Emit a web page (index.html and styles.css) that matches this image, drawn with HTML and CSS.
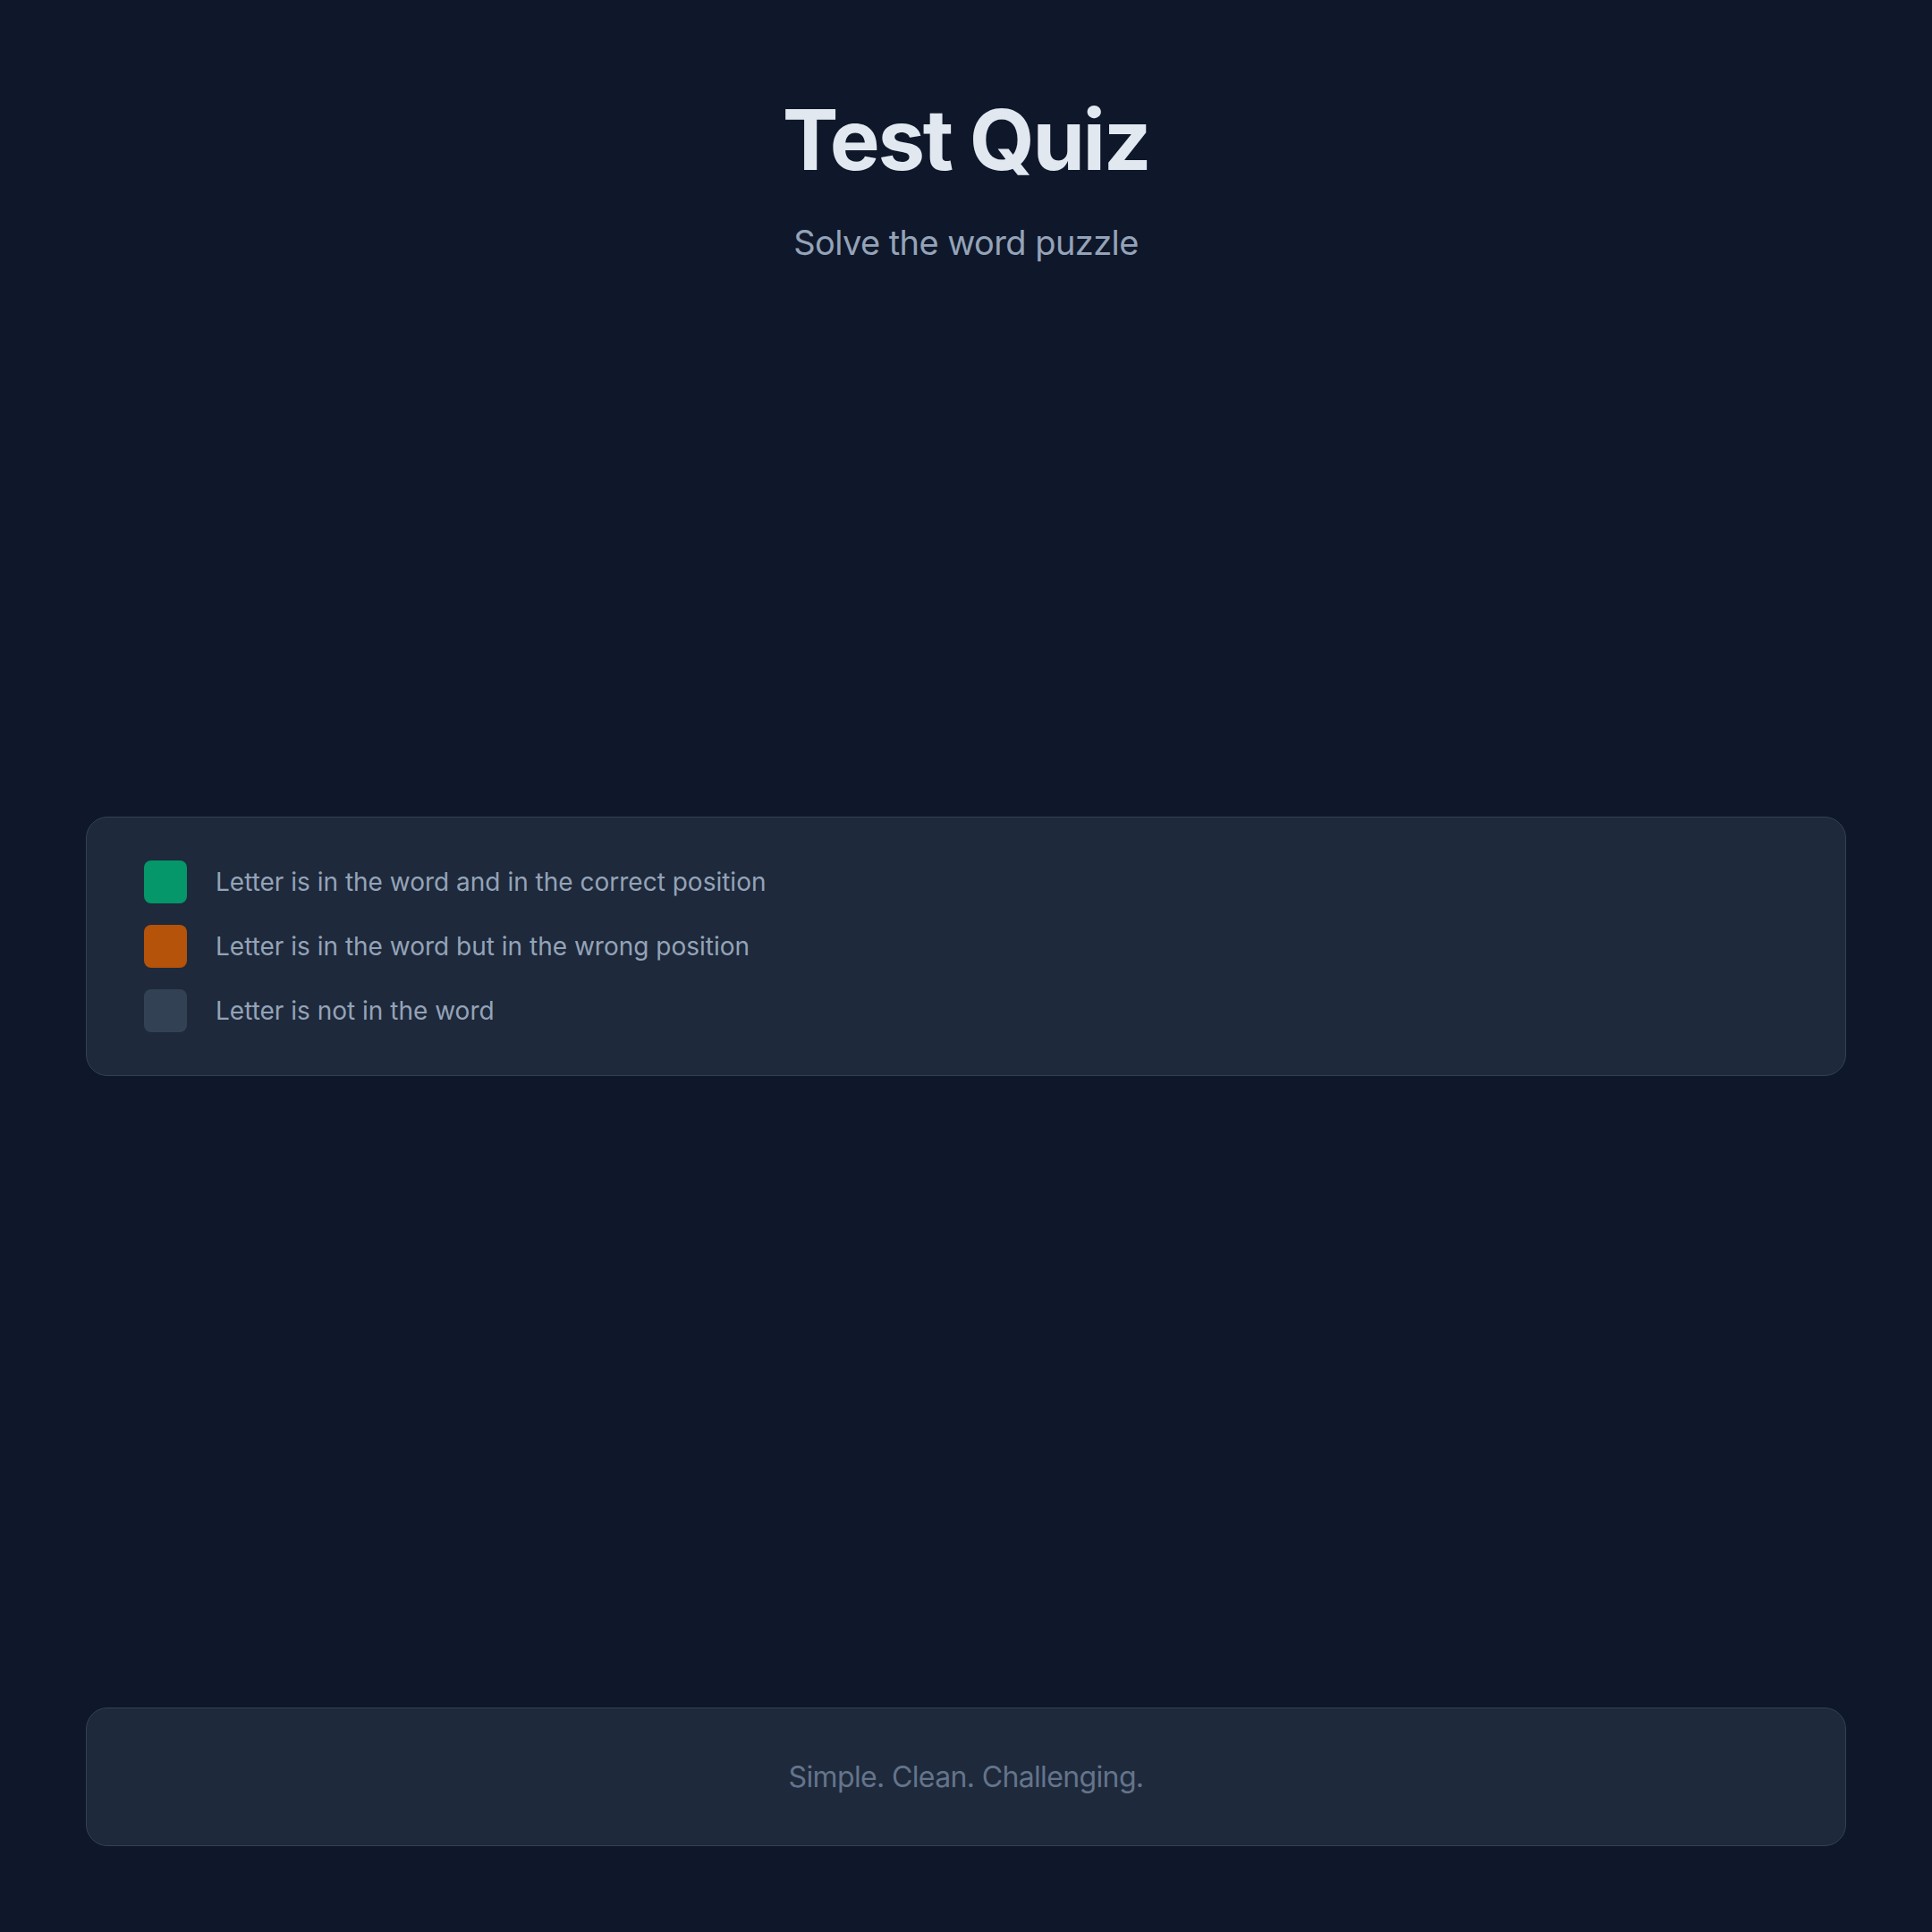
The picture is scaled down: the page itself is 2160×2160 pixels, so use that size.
FILE: index.html
```html
<!DOCTYPE html>
<html lang="en">
<head>
<meta charset="utf-8">
<title>Test Quiz</title>
<link rel="stylesheet" href="styles.css">
</head>
<body>
<div class="page">
  <header class="header">
    <h1 class="title">Test Quiz</h1>
    <p class="subtitle">Solve the word puzzle</p>
  </header>
  <section class="legend">
    <div class="legend-row">
      <span class="swatch swatch-correct"></span>
      <span class="legend-text">Letter is in the word and in the correct position</span>
    </div>
    <div class="legend-row">
      <span class="swatch swatch-present"></span>
      <span class="legend-text">Letter is in the word but in the wrong position</span>
    </div>
    <div class="legend-row">
      <span class="swatch swatch-absent"></span>
      <span class="legend-text">Letter is not in the word</span>
    </div>
  </section>
  <footer class="footer">
    <p class="footer-text">Simple. Clean. Challenging.</p>
  </footer>
</div>
</body>
</html>
```

FILE: styles.css
```css
* { box-sizing: border-box; }
html, body { margin: 0; padding: 0; }
body {
  background: #0f172a;
  font-family: Inter, "Noto Sans", "Liberation Sans", sans-serif;
  color: #e2e8f0;
}
.page {
  min-height: 100vh;
  display: flex;
  flex-direction: column;
  padding: 109px 96px 96px;
}
.header { text-align: center; }
.title {
  margin: 0;
  font-size: 94px;
  line-height: 1;
  font-weight: 700;
  letter-spacing: -0.025em;
  color: #e2e8f0;
}
.subtitle {
  margin: 38px 0 0;
  font-size: 38px;
  line-height: 60px;
  letter-spacing: -0.015em;
  color: #94a3b8;
}
.legend {
  margin-top: 612px;
  background: #1e293b;
  border: 1px solid #334155;
  border-radius: 24px;
  padding: 48px 64px;
  display: flex;
  flex-direction: column;
  gap: 24px;
}
.legend-row {
  display: flex;
  align-items: center;
  gap: 32px;
}
.swatch {
  width: 48px;
  height: 48px;
  border-radius: 8px;
  flex: none;
}
.swatch-correct { background: #059669; }
.swatch-present { background: #b45309; }
.swatch-absent { background: #334155; }
.legend-text {
  font-size: 28px;
  line-height: 40px;
  color: #94a3b8;
}
.footer {
  margin-top: auto;
  background: #1e293b;
  border: 1px solid #334155;
  border-radius: 24px;
  padding: 48px;
  text-align: center;
}
.footer-text {
  margin: 0;
  font-size: 32px;
  line-height: 57px;
  letter-spacing: -0.02em;
  color: #64748b;
}
```
